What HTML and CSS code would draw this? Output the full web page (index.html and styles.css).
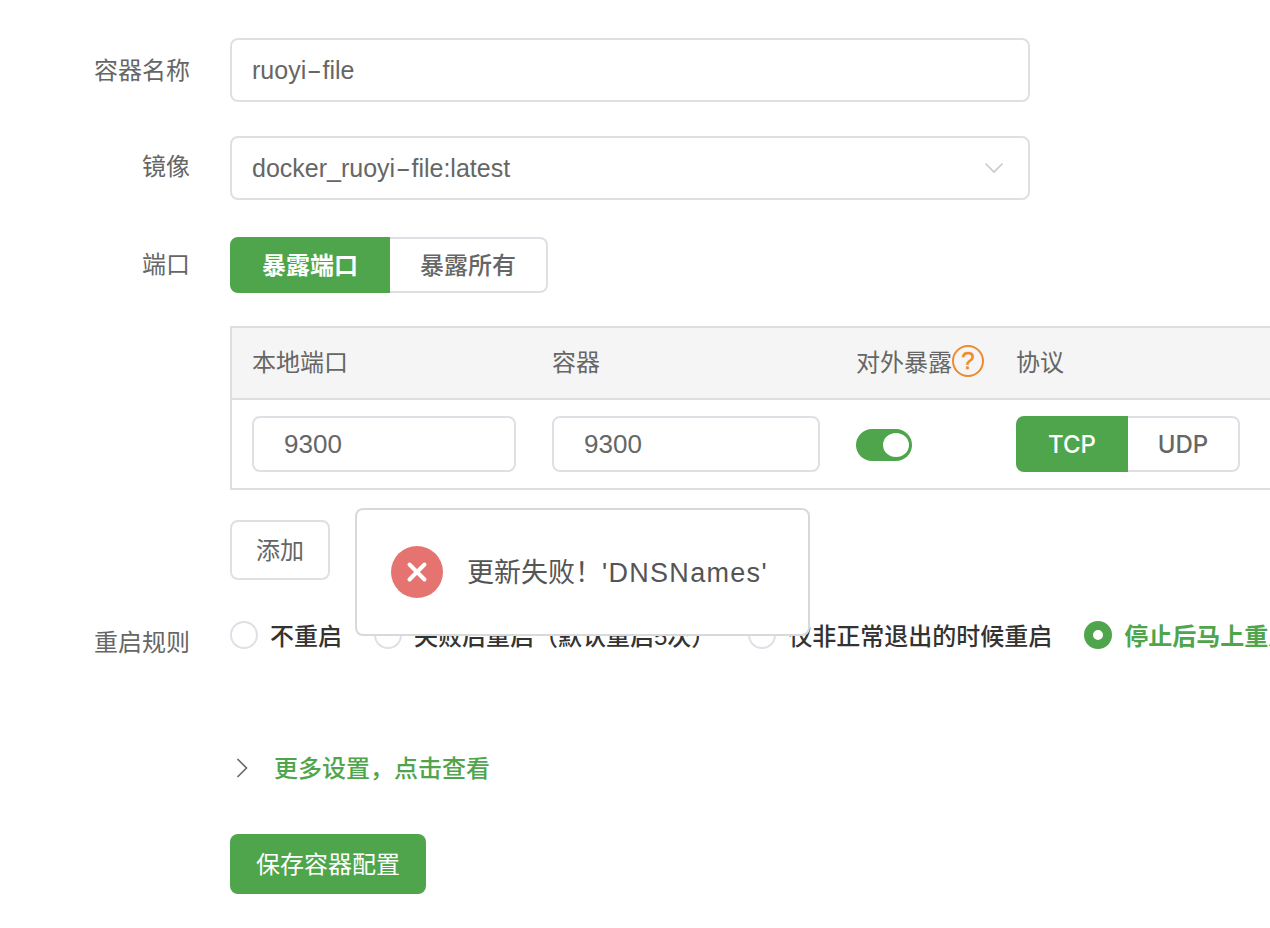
FILE: index.html
```html
<!DOCTYPE html>
<html lang="zh-CN">
<head>
<meta charset="utf-8">
<title>容器配置</title>
<link rel="stylesheet" href="styles.css">
</head>
<body>
<form class="form">
  <div class="row row-name">
    <div class="label">容器名称</div>
    <div class="field text-input wide"><span class="value">ruoyi<span class="dash">-</span>file</span></div>
  </div>
  <div class="row row-image">
    <div class="label">镜像</div>
    <div class="field text-input wide select">
      <span class="value">docker_ruoyi<span class="dash">-</span>file:latest</span>
      <svg class="caret" width="20" height="12" viewBox="0 0 20 12"><path d="M1.5 1.5 10 10l8.500-8.500" fill="none" stroke="#c8c9cc" stroke-width="1.6"/></svg>
    </div>
  </div>
  <div class="row row-port">
    <div class="label">端口</div>
    <div class="segment">
      <div class="seg seg-a on">暴露端口</div>
      <div class="seg seg-a off">暴露所有</div>
    </div>
  </div>
  <div class="row row-table">
    <div class="label"></div>
    <div class="table">
      <div class="thead">
        <div class="cell">本地端口</div>
        <div class="cell">容器</div>
        <div class="cell">对外暴露<span class="help">?</span></div>
        <div class="cell">协议</div>
      </div>
      <div class="tbody">
        <div class="cell"><div class="text-input port port-a">9300</div></div>
        <div class="cell"><div class="text-input port port-b">9300</div></div>
        <div class="cell"><div class="switch"><div class="knob"></div></div></div>
        <div class="cell">
          <div class="segment">
            <div class="seg seg-b on">TCP</div>
            <div class="seg seg-b off">UDP</div>
          </div>
        </div>
      </div>
    </div>
  </div>
  <div class="row row-add">
    <div class="label"></div>
    <div class="btn-add">添加</div>
  </div>
  <div class="row row-radio">
    <div class="label label-radio">重启规则</div>
    <div class="radios">
      <div class="radio"><span class="dot"></span>不重启</div>
      <div class="radio radio-long"><span class="dot"></span>失败后重启（默认重启5次）</div>
      <div class="radio"><span class="dot"></span>仅非正常退出的时候重启</div>
      <div class="radio checked"><span class="dot"></span>停止后马上重启</div>
    </div>
  </div>
  <div class="row row-more">
    <div class="label"></div>
    <div class="more">
      <svg class="chev" width="12" height="20" viewBox="0 0 12 20"><path d="M1.500 1 10.500 10l-9 9" fill="none" stroke="#666" stroke-width="1.6"/></svg>
      <span class="more-text">更多设置，点击查看</span>
    </div>
  </div>
  <div class="row row-save">
    <div class="label"></div>
    <div class="btn-save">保存容器配置</div>
  </div>
</form>
<div class="toast">
  <svg class="toast-icon" width="52" height="52" viewBox="0 0 52 52"><circle cx="26" cy="26" r="26" fill="#e57471"/><path d="M18.500 18.500l15 15M33.500 18.500l-15 15" stroke="#fff" stroke-width="4" stroke-linecap="round"/></svg>
  <span class="toast-text">更新失败！<span class="toast-latin">'DNSNames'</span></span>
</div>
</body>
</html>
```
FILE: styles.css
```css
* { box-sizing: border-box; }
html, body { margin: 0; height: 100%; overflow: hidden; background: #fff; }
body {
  font-family: "Liberation Sans", "Noto Sans CJK SC", sans-serif;
  font-size: 24px;
  color: #666;
  position: relative;
}
.form { padding-top: 38px; width: 1400px; }
.row { display: flex; }
.label { width: 190px; margin-right: 40px; text-align: right; flex: none; }
.row-name { height: 64px; }
.row-image { height: 64px; margin-top: 34px; }
.row-port { height: 56px; margin-top: 37px; }
.row-table { margin-top: 33px; }
.row-add { margin-top: 30px; }
.row-radio { margin-top: 30px; height: 52px; }
.row-more { margin-top: 86px; height: 40px; }
.row-save { margin-top: 46px; }
.row-name .label { line-height: 64px; margin-top: 1px; }
.row-image .label { line-height: 64px; margin-top: -1px; }
.row-port .label { line-height: 56px; }
.label-radio { line-height: 66px; }

.text-input {
  border: 2px solid #dfdfe6;
  border-radius: 8px;
  background: #fff;
  display: flex;
  align-items: center;
}
.wide { width: 800px; height: 64px; padding: 0 20px; }
.value { font-size: 25px; font-variant-ligatures: common-ligatures; }
.dash { display: inline-block; transform: scaleX(1.8); margin: 0 4px; }
.select { justify-content: space-between; padding-right: 24px; }
.segment { display: flex; }
.seg {
  height: 56px;
  display: flex;
  align-items: center;
  justify-content: center;
  border: 2px solid #dfdfe6;
}
.seg.on {
  background: #4fa54b;
  border-color: #4fa54b;
  color: #fff;
  border-radius: 8px 0 0 8px;
}
.seg.off {
  background: #fff;
  border-left: none;
  border-radius: 0 8px 8px 0;
}
.seg-a { font-weight: 500; padding-bottom: 4px; }
.seg-a.on { width: 160px; font-weight: 700; }
.seg-a.off { width: 158px; }
.seg-b { width: 112px; font-family: "Inter", "Liberation Sans", sans-serif; font-weight: 500; font-size: 24px; }

.table {
  width: 1100px;
  flex: none;
  border: 2px solid #dedede;
  border-right: none;
}
.thead, .tbody {
  display: grid;
  grid-template-columns: 300px 304px 160px 1fr;
}
.thead {
  height: 72px;
  background: #f5f5f5;
  border-bottom: 2px solid #dedede;
}
.thead .cell { padding-bottom: 5px; }
.tbody { height: 88px; }
.cell { display: flex; align-items: center; padding-left: 20px; }
.port { height: 56px; padding-left: 30px; font-size: 26px; }
.port-a { width: 264px; }
.port-b { width: 268px; }
.help {
  width: 32px;
  height: 32px;
  flex: none;
  border: 2px solid #ee8a2e;
  border-radius: 50%;
  color: #ee8a2e;
  font-size: 24px;
  font-weight: 400;
  line-height: 28px;
  text-align: center;
  -webkit-text-stroke: 0.5px #ee8a2e;
}
.switch {
  width: 56px;
  height: 32px;
  margin-top: 2px;
  border-radius: 16px;
  background: #4fa54b;
  display: flex;
  align-items: center;
  justify-content: flex-end;
  padding-right: 3px;
}
.knob { width: 26px; height: 24px; border-radius: 50%; background: #fff; }

.btn-add {
  width: 100px;
  height: 60px;
  border: 2px solid #dfdfe6;
  border-radius: 8px;
  display: flex;
  align-items: center;
  justify-content: center;
  padding-bottom: 3px;
}
.radios { display: flex; height: 52px; }
.radio {
  display: flex;
  align-items: center;
  gap: 12px;
  margin-right: 32px;
  padding-bottom: 4px;
  font-weight: 500;
  color: #333;
  white-space: nowrap;
}
.radio-long { margin-right: 33px; }
.dot {
  width: 28px;
  height: 28px;
  border: 2px solid #dfdfe6;
  border-radius: 50%;
  flex: none;
  margin-top: 2px;
}
.checked { color: #4fa54b; font-weight: 700; }
.checked .dot { border: 9px solid #4fa54b; }
.more {
  display: flex;
  align-items: center;
  gap: 26px;
  color: #4fa54b;
  font-weight: 500;
}
.more-text { padding-bottom: 4px; }
.chev { margin-left: 6px; }
.btn-save {
  width: 196px;
  height: 60px;
  border-radius: 8px;
  background: #4fa54b;
  color: #fff;
  display: flex;
  align-items: center;
  justify-content: center;
  padding-bottom: 4px;
}
.toast {
  position: absolute;
  left: 355px;
  top: 508px;
  width: 455px;
  height: 128px;
  background: #fff;
  border: 2px solid #d9d9d9;
  border-radius: 8px;
  display: flex;
  align-items: center;
  padding-left: 34px;
  gap: 24px;
}
.toast-text { font-size: 27px; color: #555; white-space: nowrap; padding-bottom: 4px; }
.toast-latin { letter-spacing: 1.3px; }
```
